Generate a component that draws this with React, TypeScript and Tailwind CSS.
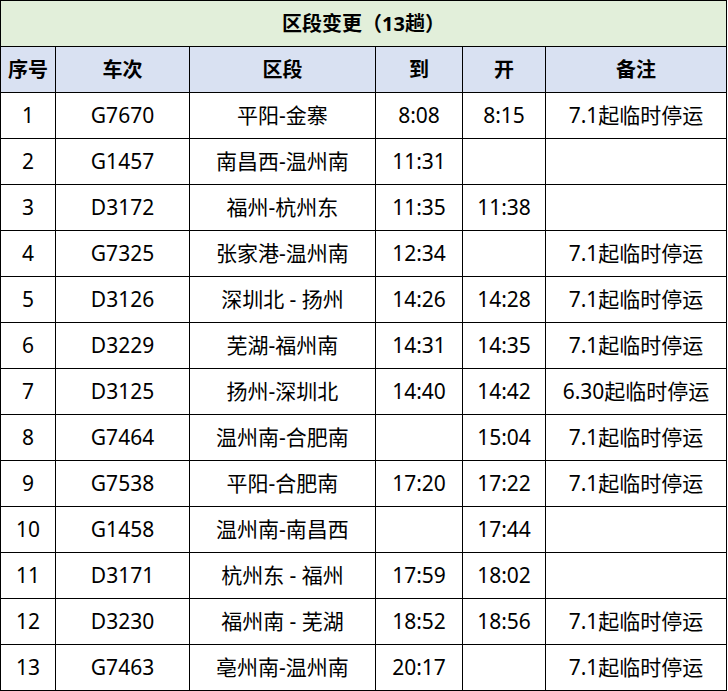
import React from "react";

const rows: [string, string, string, string, string, string][] = [
  ["1", "G7670", "平阳-金寨", "8:08", "8:15", "7.1起临时停运"],
  ["2", "G1457", "南昌西-温州南", "11:31", "", ""],
  ["3", "D3172", "福州-杭州东", "11:35", "11:38", ""],
  ["4", "G7325", "张家港-温州南", "12:34", "", "7.1起临时停运"],
  ["5", "D3126", "深圳北 - 扬州", "14:26", "14:28", "7.1起临时停运"],
  ["6", "D3229", "芜湖-福州南", "14:31", "14:35", "7.1起临时停运"],
  ["7", "D3125", "扬州-深圳北", "14:40", "14:42", "6.30起临时停运"],
  ["8", "G7464", "温州南-合肥南", "", "15:04", "7.1起临时停运"],
  ["9", "G7538", "平阳-合肥南", "17:20", "17:22", "7.1起临时停运"],
  ["10", "G1458", "温州南-南昌西", "", "17:44", ""],
  ["11", "D3171", "杭州东 - 福州", "17:59", "18:02", ""],
  ["12", "D3230", "福州南 - 芜湖", "18:52", "18:56", "7.1起临时停运"],
  ["13", "G7463", "亳州南-温州南", "20:17", "", "7.1起临时停运"],
];

const headers = ["序号", "车次", "区段", "到", "开", "备注"];

export default function App() {
  return (
    <div
      className="w-[728px] h-[691px] bg-white text-black"
      style={{ fontFamily: '"Noto Sans", "Noto Sans CJK SC", sans-serif' }}
    >
      <table className="table-fixed border-collapse w-[726px] text-[20px] leading-none">
        <colgroup>
          <col className="w-[55px]" />
          <col className="w-[134px]" />
          <col className="w-[186px]" />
          <col className="w-[87px]" />
          <col className="w-[83px]" />
          <col className="w-[181px]" />
        </colgroup>
        <tbody>
          <tr className="h-[46px]">
            <td
              colSpan={6}
              className="border border-black bg-[#e2efda] text-center font-bold p-0"
            >
              区段变更（13趟）
            </td>
          </tr>
          <tr className="h-[46px]">
            {headers.map((h) => (
              <td
                key={h}
                className="border border-black bg-[#d9e1f2] text-center font-bold p-0"
              >
                {h}
              </td>
            ))}
          </tr>
          {rows.map((r) => (
            <tr key={r[0]} className="h-[46px]">
              {r.map((c, i) => (
                <td
                  key={i}
                  className="border border-black text-center p-0 whitespace-nowrap text-[21px]"
                >
                  {c}
                </td>
              ))}
            </tr>
          ))}
        </tbody>
      </table>
    </div>
  );
}
